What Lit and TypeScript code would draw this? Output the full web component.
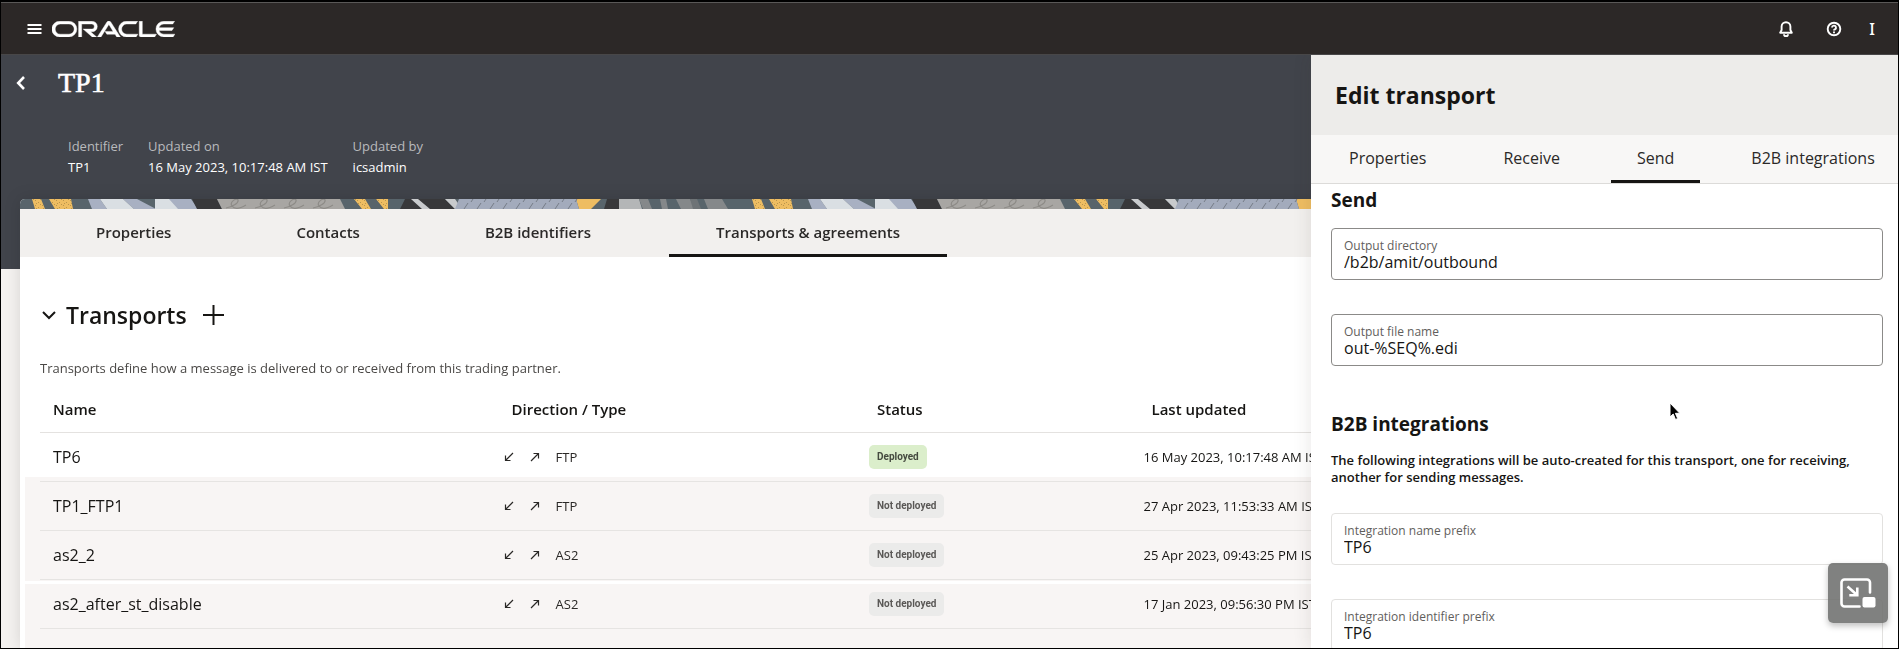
import { LitElement, html, css, svg } from 'lit';
import { customElement, property, state } from 'lit/decorators.js';
import { classMap } from 'lit/directives/class-map.js';

interface Transport {
  name: string;
  type: string;
  deployed: boolean;
  updated: string;
}

const TRANSPORTS: Transport[] = [
  { name: 'TP6', type: 'FTP', deployed: true, updated: '16 May 2023, 10:17:48 AM IST' },
  { name: 'TP1_FTP1', type: 'FTP', deployed: false, updated: '27 Apr 2023, 11:53:33 AM IST' },
  { name: 'as2_2', type: 'AS2', deployed: false, updated: '25 Apr 2023, 09:43:25 PM IST' },
  { name: 'as2_after_st_disable', type: 'AS2', deployed: false, updated: '17 Jan 2023, 09:56:30 PM IST' },
];

const reset = css`
  * {
    box-sizing: border-box;
    margin: 0;
  }
  button,
  input {
    font: inherit;
    color: inherit;
    background: none;
    border: 0;
    padding: 0;
  }
  button {
    cursor: pointer;
  }
  svg {
    display: block;
  }
`;

@customElement('app-header')
class AppHeader extends LitElement {
  static styles = [
    reset,
    css`
      :host {
        display: block;
      }
      header {
        display: flex;
        align-items: center;
        height: 53px;
        padding: 0 14px 0 26px;
        background: #2c2827;
        border-top: 1px solid #5a5857;
        border-bottom: 1px solid #484748;
        color: #fff;
      }
      .logo {
        margin-left: 10px;
      }
      .tools {
        display: flex;
        align-items: center;
        gap: 24px;
        margin-left: auto;
      }
      .tools button {
        display: grid;
        place-items: center;
        width: 24px;
        height: 24px;
      }
      .avatar {
        width: 24px;
        height: 24px;
        margin-left: 14px;
        font: 500 16px/24px 'Noto Sans', sans-serif;
        text-align: center;
      }
    `,
  ];

  render() {
    return html`
      <header>
        <button aria-label="Navigation menu">
          <svg width="15" height="12" viewBox="0 0 15 12" fill="currentColor">
            <path d="M0.5 1h14v2h-14zM0.5 5h14v2h-14zM0.5 9h14v2h-14z" />
          </svg>
        </button>
        <svg class="logo" width="123" height="16" viewBox="0 0 231 30" fill="currentColor" stroke="currentColor" stroke-width="0.800" role="img" aria-label="Oracle">
          <path
            d="M99.61,19.52h15.24l-8.05-13L92,30H85.27l18-28.17a4.29,4.29,0,0,1,7-.05L128.32,30h-6.73l-3.17-5.25H103l-3.36-5.23m69.93,5.23V.28h-5.72V27.16a2.76,2.76,0,0,0,.85,2,2.89,2.89,0,0,0,2.08.87h26l3.39-5.25H169.54M75,20.38A10,10,0,0,0,75,.28H50V30h5.71V5.54H74.65a4.81,4.81,0,0,1,0,9.62H58.54L75.6,30h8.29L72.43,20.38H75M14.88,30H32.15a14.86,14.86,0,0,0,0-29.71H14.88a14.86,14.86,0,1,0,0,29.71m16.88-5.23H15.26a9.62,9.62,0,0,1,0-19.23h16.5a9.62,9.62,0,1,1,0,19.23M140.25,30h17.63l3.34-5.23H140.64a9.62,9.62,0,1,1,0-19.23h16.75l3.38-5.25H140.25a14.86,14.86,0,1,0,0,29.71m69.87-5.23a9.62,9.62,0,0,1-9.26-7h24.42l3.36-5.24H200.86a9.61,9.61,0,0,1,9.26-7h16.76l3.35-5.25h-20.5a14.86,14.86,0,0,0,0,29.71h17.63l3.35-5.23h-20.6"
          />
        </svg>
        <div class="tools">
          <button aria-label="Notifications">
            <svg width="14" height="16" viewBox="0 0 14 16" fill="none" stroke="currentColor" stroke-width="1.900" stroke-linejoin="round">
              <path d="M1.2 11.7h11.6L11.4 9V5.6a4.4 4.4 0 0 0-8.8 0V9z" />
              <path d="M5 13.3a2 2 0 0 0 4 0" />
            </svg>
          </button>
          <button aria-label="Help">
            <svg width="16" height="16" viewBox="0 0 16 16" fill="none" stroke="currentColor" stroke-width="1.900">
              <circle cx="8" cy="8" r="6.300" />
              <path d="M6 6.600a2 2 0 1 1 2.900 1.800c-.6.3-.9.6-.9 1.200" />
              <path d="M8 10.400v1.800" />
            </svg>
          </button>
        </div>
        <button class="avatar" aria-label="Account">I</button>
      </header>
    `;
  }
}

@customElement('page-banner')
class PageBanner extends LitElement {
  static styles = [
    reset,
    css`
      :host {
        display: block;
        height: 10px;
      }
      svg {
        width: 100%;
        height: 10px;
      }
    `,
  ];

  private loops(from: number, count: number, step: number) {
    return Array.from({ length: count }, (_, i) => {
      const x = from + i * step;
      return svg`<path d="M${x} 9c6-1 13-5 12-8s-9 2-6 6 9 2 14-1" />`;
    });
  }

  private dashes(from: number, count: number, step: number) {
    return Array.from({ length: count }, (_, i) => {
      const x = from + i * step;
      return svg`<path d="M${x} 10l4-6m3-1l2-3" />`;
    });
  }

  render() {
    return html`
      <svg aria-hidden="true">
        <defs>
          <pattern id="grain" width="7" height="5" patternUnits="userSpaceOnUse">
            <path d="M1 1h1v1h-1zM4 3h1v1h-1zM6 0h1v1h-1zM2 4h1v1h-1z" fill="#6b5a2c" opacity="0.4" />
          </pattern>
          <pattern id="band" width="720" height="10" patternUnits="userSpaceOnUse">
            <path fill="#58646b" d="M0 0h720v10H0z" />
            <path fill="#eebd62" d="M12 0h9l4 10h-10zM29 0h22l2 10H35zM334 0h11l6 10h-9zM356 0h12v10h-4zM556 0h25l-10 10h-12z" />
            <path fill="url(#grain)" d="M12 0h9l4 10h-10zM29 0h22l2 10H35zM334 0h11l6 10h-9zM356 0h12v10h-4z" />
            <path fill="#a8b0c2" d="M68 0h12l7 10H72zM103 0h14l19 10h-22zM145 0h26l7 10h-22z" />
            <path fill="#dadfe3" d="M80 0h23l11 10H87zM135 0h14l9 10h-23z" />
            <path fill="#38383a" d="M172 0h25l5 10h-25zM385 0h40l10 10h-55zM587 0h12v10h-15z" />
            <path fill="#a8a6a3" d="M197 0h123l5 10H202z" />
            <g fill="none" stroke="#8d8b87" stroke-width="1.200">${this.loops(206, 4, 29)}</g>
            <path fill="#c9cbcd" d="M391 0h7l12 10h-8zM425 0h10l7 10h-7z" />
            <path fill="#a3abbc" d="M439 0h117l3 10H435z" />
            <g fill="none" stroke="#767c87" stroke-width="1">${this.dashes(444, 9, 13)}</g>
            <path fill="#b4b6b7" d="M599 0h20l3 10h-23z" />
            <path fill="#85888a" d="M619 0h9l4 10h-9zM640 0h6l2 10h-6zM656 0h14l5 10h-14zM684 0h18l6 10h-20z" />
            <path fill="#6e7376" d="M670 0h7l4 10h-8z" />
          </pattern>
        </defs>
        <rect width="100%" height="10" fill="url(#band)" />
      </svg>
    `;
  }
}

@customElement('partner-page')
class PartnerPage extends LitElement {
  @state() private tab = 'Transports & agreements';
  private readonly tabs = ['Properties', 'Contacts', 'B2B identifiers', 'Transports & agreements'];

  static styles = [
    reset,
    css`
      :host {
        display: flex;
        flex-direction: column;
        min-width: 0;
        background: #f4f2f0;
      }
      .hero {
        padding: 10px 0 91px 15px;
        background: #41444b;
        color: #fff;
      }
      .title {
        display: flex;
        align-items: center;
        gap: 33px;
      }
      h1 {
        font: 500 28px/36px 'Liberation Serif', serif;
        -webkit-text-stroke: 0.6px #fff;
      }
      .facts {
        display: flex;
        gap: 25px;
        padding: 35px 0 0 52px;
        line-height: 21px;
      }
      .facts dt {
        color: #b9babd;
      }
      .card {
        flex: 1;
        display: flex;
        flex-direction: column;
        margin: -70px 20px 0 19px;
        background: #fff;
        border-radius: 5px 5px 0 0;
        overflow: hidden;
      }
      .shade {
        flex: 1;
        display: flex;
        flex-direction: column;
        filter: drop-shadow(0 0 8px rgba(0, 0, 0, 0.12));
      }
      .tabs {
        display: flex;
        gap: 31px;
        height: 48px;
        padding-left: 29px;
        background: #f2f0ee;
      }
      .tabs button {
        padding: 0 47px;
        border-top: 3px solid transparent;
        border-bottom: 3px solid transparent;
        font-size: 15px;
        font-weight: 600;
        color: #2b2928;
        padding-bottom: 2px;
      }
      .tabs .active {
        border-bottom-color: #161513;
      }
      section {
        flex: 1;
        display: flex;
        flex-direction: column;
        padding: 42px 20px 0;
      }
      .heading {
        display: flex;
        align-items: center;
        color: #161513;
      }
      .heading h2 {
        margin: 0 16px 0 10px;
        font-size: 23px;
        line-height: 32px;
        font-weight: 600;
      }
      .fold {
        padding-left: 2px;
      }
      .note {
        margin-top: 27px;
        line-height: 20px;
        color: #4a4846;
      }
      .grid {
        flex: 1;
        margin: 8px -15px 0;
        padding: 0 15px;
        background: linear-gradient(
          #fff 91px,
          #f8f5f4 91px,
          #f8f5f4 195px,
          #fff 195px,
          #fff 198px,
          #f8f5f4 198px
        );
      }
      table {
        width: 100%;
        border-collapse: collapse;
        table-layout: fixed;
        color: #161513;
      }
      .c1 {
        width: 25.5%;
      }
      .c2 {
        width: 20.1%;
      }
      .c3 {
        width: 15.1%;
      }
      th {
        height: 46px;
        padding: 0 13px;
        font-size: 15px;
        font-weight: 600;
        text-align: left;
        border-bottom: 1px solid #e4e2e0;
      }
      td {
        height: 49px;
        padding: 0 13px;
        font-size: 16px;
        border-bottom: 1px solid #e6e4e2;
      }
      th + th {
        padding-left: 8px;
      }
      td + td {
        padding: 0;
        font-size: 13px;
      }
      .route {
        display: flex;
        align-items: center;
        gap: 16px;
        color: #2a2826;
      }
      .badge {
        display: inline-block;
        padding: 0 8px;
        border-radius: 5px;
        background: #ebebea;
        color: #5a5856;
        font: 700 10px/24px Roboto, sans-serif;
        vertical-align: middle;
      }
      .badge.on {
        background: #dbeecb;
        color: #454a3f;
      }
    `,
  ];

  private arrow(path: string, label: string) {
    return html`<svg width="10" height="10" viewBox="0 0 10 10" fill="none" stroke="currentColor" stroke-width="1.2" role="img" aria-label=${label}>
      <path d=${path} />
    </svg>`;
  }

  render() {
    return html`
      <div class="hero">
        <div class="title">
          <button aria-label="Back">
            <svg width="9" height="14" viewBox="0 0 9 14" fill="none" stroke="currentColor" stroke-width="2.6">
              <path d="M8 1L2.2 7L8 13" />
            </svg>
          </button>
          <h1>TP1</h1>
        </div>
        <dl class="facts">
          <div><dt>Identifier</dt><dd>TP1</dd></div>
          <div><dt>Updated on</dt><dd>16 May 2023, 10:17:48 AM IST</dd></div>
          <div><dt>Updated by</dt><dd>icsadmin</dd></div>
        </dl>
      </div>
      <div class="shade">
        <div class="card">
          <page-banner></page-banner>
          <div class="tabs" role="tablist">
            ${this.tabs.map(
              (t) => html`<button
                role="tab"
                aria-selected=${t === this.tab}
                class=${classMap({ active: t === this.tab })}
                @click=${() => (this.tab = t)}
              >${t}</button>`,
            )}
          </div>
          <section>
            <div class="heading">
              <button class="fold" aria-label="Collapse transports">
                <svg width="14" height="10" viewBox="0 0 14 10" fill="none" stroke="currentColor" stroke-width="2">
                  <path d="M1 2l6 6l6-6" />
                </svg>
              </button>
              <h2>Transports</h2>
              <button aria-label="Add transport">
                <svg width="21" height="20" viewBox="0 0 21 20" fill="currentColor">
                  <path d="M9.5 0h2v9h9.500v2h-9.500v9h-2v-9H0V9h9.500z" />
                </svg>
              </button>
            </div>
            <p class="note">Transports define how a message is delivered to or received from this trading partner.</p>
            <div class="grid">
              <table>
                <thead>
                  <tr>
                    <th class="c1">Name</th>
                    <th class="c2">Direction / Type</th>
                    <th class="c3">Status</th>
                    <th>Last updated</th>
                  </tr>
                </thead>
                <tbody>
                  ${TRANSPORTS.map(
                    (t) => html`<tr>
                      <td>${t.name}</td>
                      <td>
                        <div class="route">
                          ${this.arrow('M9 1L1.500 8.500M1.500 3.500v5h5', 'Receive')}
                          ${this.arrow('M1 9L8.500 1.500M3.500 1.500h5v5', 'Send')}
                          <span>${t.type}</span>
                        </div>
                      </td>
                      <td><span class=${classMap({ badge: true, on: t.deployed })}>${t.deployed ? 'Deployed' : 'Not deployed'}</span></td>
                      <td>${t.updated}</td>
                    </tr>`,
                  )}
                </tbody>
              </table>
            </div>
          </section>
        </div>
      </div>
    `;
  }
}

@customElement('text-field')
class TextField extends LitElement {
  @property() label = '';
  @property() value = '';
  @property({ type: Boolean, reflect: true }) locked = false;

  static styles = [
    reset,
    css`
      :host {
        display: block;
      }
      .box {
        display: flex;
        flex-direction: column;
        padding: 9px 12px 8px;
        border: 1px solid #8b8a88;
        border-radius: 4px;
        background: #fff;
      }
      :host([locked]) .box {
        border-color: #e2e1df;
      }
      label {
        font-size: 12px;
        line-height: 16px;
        color: #5f5e5c;
      }
      input {
        width: 100%;
        height: 17px;
        font-size: 16px;
        line-height: 17px;
        color: #161513;
        outline: 0;
      }
    `,
  ];

  render() {
    return html`
      <div class="box">
        <label for="field">${this.label}</label>
        <input id="field" type="text" .value=${this.value} ?readonly=${this.locked} />
      </div>
    `;
  }
}

@customElement('transport-drawer')
class TransportDrawer extends LitElement {
  @state() private tab = 'Send';
  private readonly tabs = ['Properties', 'Receive', 'Send', 'B2B integrations'];

  static styles = [
    reset,
    css`
      :host {
        display: flex;
        flex-direction: column;
        overflow: hidden;
        background: #fff;
        color: #161513;
      }
      .top {
        padding: 0 24px;
        background: #edecea;
      }
      h2 {
        font-size: 23px;
        line-height: 80px;
        font-weight: 700;
      }
      .tabs {
        display: flex;
        flex: none;
        gap: 25px;
        height: 49px;
        padding-left: 12px;
        background: #f8f7f6;
        border-bottom: 1px solid #dcdbd9;
      }
      .tabs button {
        flex: none;
        padding: 0 26px;
        border-bottom: 3px solid transparent;
        font-size: 16px;
        font-weight: 500;
        color: #2b2928;
      }
      .tabs .active {
        border-bottom-color: #161513;
      }
      .form {
        padding: 2px 15px 0 20px;
      }
      h3 {
        margin-bottom: 14px;
        font-size: 19px;
        line-height: 28px;
        font-weight: 700;
      }
      .group {
        display: grid;
        gap: 34px;
      }
      .group + h3 {
        margin-top: 44px;
      }
      p {
        margin-bottom: 27px;
        font-weight: 600;
        line-height: 17px;
      }
    `,
  ];

  render() {
    return html`
      <div class="top"><h2>Edit transport</h2></div>
      <div class="tabs" role="tablist">
        ${this.tabs.map(
          (t) => html`<button
            role="tab"
            aria-selected=${t === this.tab}
            class=${classMap({ active: t === this.tab })}
            @click=${() => (this.tab = t)}
          >${t}</button>`,
        )}
      </div>
      <div class="form">
        <h3>Send</h3>
        <div class="group">
          <text-field label="Output directory" value="/b2b/amit/outbound"></text-field>
          <text-field label="Output file name" value="out-%SEQ%.edi"></text-field>
        </div>
        <h3>B2B integrations</h3>
        <p>The following integrations will be auto-created for this transport, one for receiving, another for sending messages.</p>
        <div class="group">
          <text-field locked label="Integration name prefix" value="TP6"></text-field>
          <text-field locked label="Integration identifier prefix" value="TP6"></text-field>
        </div>
      </div>
    `;
  }
}

@customElement('app-root')
class AppRoot extends LitElement {
  static styles = [
    reset,
    css`
      :host {
        box-sizing: border-box;
        display: flex;
        flex-direction: column;
        height: 100vh;
        border: 1px solid #000;
        border-top-width: 2px;
        font: 400 13px/20px 'Open Sans', 'Noto Sans', sans-serif;
        overflow: hidden;
      }
      .body {
        position: relative;
        flex: 1;
        display: grid;
        min-height: 0;
        overflow: hidden;
      }
      transport-drawer {
        position: absolute;
        top: 0;
        right: 0;
        bottom: 0;
        width: 587px;
        box-shadow: -2px 0 16px rgba(60, 50, 40, 0.1);
      }
      .pip {
        position: absolute;
        right: 10px;
        bottom: 25px;
        display: grid;
        place-items: center;
        width: 60px;
        height: 60px;
        border-radius: 5px;
        background: rgba(110, 111, 110, 0.88);
        color: #fff;
        box-shadow: 0 3px 6px rgba(0, 0, 0, 0.25);
      }
      .pointer {
        position: absolute;
        right: 217px;
        top: 347px;
      }
    `,
  ];

  render() {
    return html`
      <app-header></app-header>
      <div class="body">
        <partner-page></partner-page>
        <transport-drawer></transport-drawer>
        <svg class="pointer" width="12" height="19" viewBox="0 0 12 19" aria-hidden="true">
          <path d="M1 1v14l3.200-3l2.300 5.500l2.200-1l-2.300-5.200h4.400z" fill="#000" stroke="#fff" stroke-width="1" />
        </svg>
        <button class="pip" aria-label="Picture in picture">
          <svg width="36" height="30" viewBox="0 0 36 30" fill="none" stroke="currentColor" stroke-width="2.600">
            <path d="M30 14.500V4.500a3 3 0 0 0-3-3H4.500a3 3 0 0 0-3 3v21a3 3 0 0 0 3 3H19.500" stroke-linecap="round" />
            <path d="M7.500 8.500l9 8M17.300 9.500v7.800h-8" />
            <rect x="22.500" y="19" width="13" height="10.500" rx="2" fill="currentColor" stroke="none" />
          </svg>
        </button>
      </div>
    `;
  }
}
